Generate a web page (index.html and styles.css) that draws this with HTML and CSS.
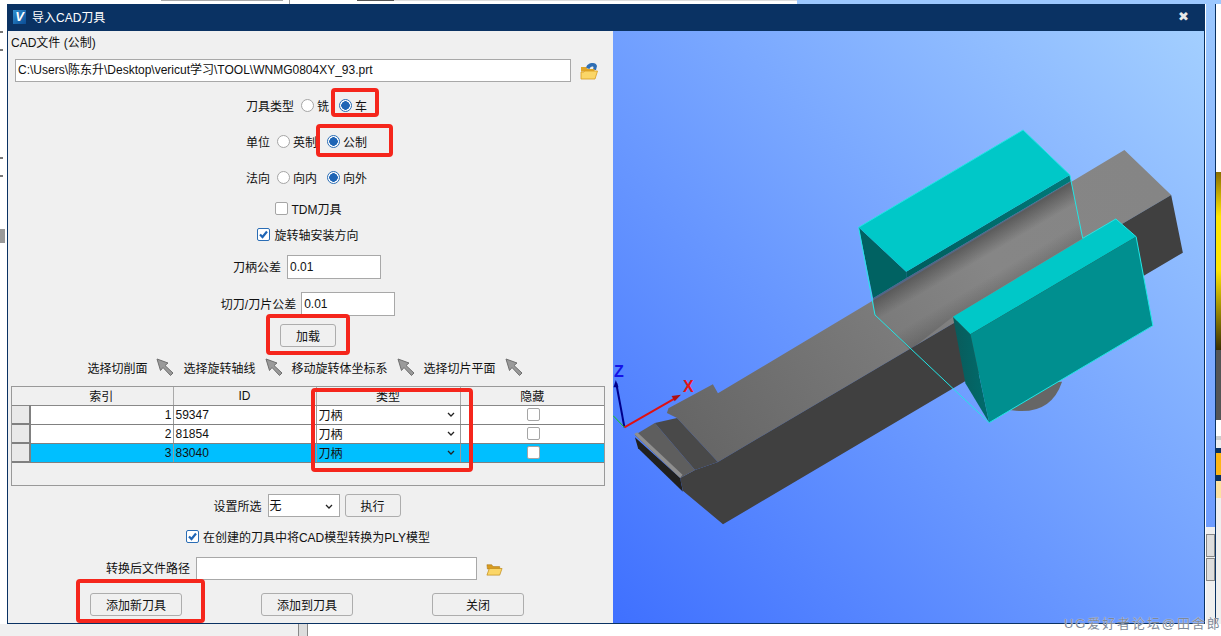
FILE: index.html
```html
<!DOCTYPE html>
<html lang="zh-CN">
<head>
  <meta charset="UTF-8">
  <title>导入CAD刀具</title>
  <link rel="stylesheet" href="styles.css">
</head>
<body>
  <svg class="defs" width="0" height="0">
    <symbol id="chev" viewBox="0 0 8 5"><path d="M1 1l3 3 3-3" fill="none" stroke="#222" stroke-width="1.3"/></symbol>
    <symbol id="tick" viewBox="0 0 11 11"><path d="M2 5.500l2.500 2.500 4.500-5.500" fill="none" stroke="#1f65b5" stroke-width="2.200"/></symbol>
    <symbol id="pick" viewBox="0 0 18 18"><path d="M1 1l11 4-3 2.500 8 7.500-2.500 2.500-7.500-8-2.500 3z" fill="#9a9a9a" stroke="#6f6f6f"/></symbol>
    <symbol id="folder" viewBox="0 0 18 18"><path d="M1 5h5l1.500 2h7v2.500h-13z" fill="#d99c1e" stroke="#a8761a" stroke-width=".6"/><path d="M1 16l2.500-7h13.500l-2.500 7z" fill="#fbd667" stroke="#c48f1d" stroke-width=".8"/></symbol>
  </svg>
  <div class="desk">
    <div class="top-strip"><i class="seg-white"></i><i class="seg-gray"></i><i class="seg-white2"></i><i class="seg-dark"></i><i class="seg-fill"></i><i class="seg-blue"></i></div>
    <div class="left-strip"></div>

    <div class="win">
      <div class="titlebar">
        <span class="logo">V</span>
        <span class="win-title">导入CAD刀具</span>
        <span class="win-close">✖</span>
      </div>
      <div class="win-body">
        <div class="form">
          <div class="cad-label">CAD文件 (公制)</div>
          <div class="path-row">
            <div class="field field-path">C:\Users\陈东升\Desktop\vericut学习\TOOL\WNMG0804XY_93.prt</div>
            <svg class="ico-open" viewBox="0 0 18 18"><path d="M6 6c.5-3 3-5 7-5 2 0 3.500 1 4 3l-1 4h-3l.5-3c-1.500-1-3.500 0-4 2z" fill="#2f6fb5"/><path d="M1 5h5l1.500 2h7v2.500h-13.500z" fill="#e0a526"/><path d="M1 17v-7h3l.5-1h13l-2.500 8z" fill="#fbd667" stroke="#d99c1e" stroke-width=".8"/></svg>
          </div>

          <div class="row row-radio row-first">
            <span>刀具类型</span>
            <span class="opt"><i class="radio"></i>铣</span>
            <span class="opt"><i class="radio on"></i>车</span>
          </div>
          <div class="row row-radio row-next">
            <span>单位</span>
            <span class="opt"><i class="radio"></i>英制</span>
            <span class="opt"><i class="radio on"></i>公制</span>
          </div>
          <div class="row row-radio row-next">
            <span>法向</span>
            <span class="opt"><i class="radio"></i>向内</span>
            <span class="opt"><i class="radio on"></i>向外</span>
          </div>

          <div class="row row-tdm"><i class="check"></i>TDM刀具</div>
          <div class="row row-rot"><i class="check on"><svg class="ico-tick"><use href="#tick"/></svg></i>旋转轴安装方向</div>

          <div class="row row-tol"><span class="lbl">刀柄公差</span><div class="field field-tol">0.01</div></div>
          <div class="row row-tol2"><span class="lbl">切刀/刀片公差</span><div class="field field-tol">0.01</div></div>
          <div class="row row-load"><button class="btn btn-load">加载</button></div>

          <div class="row row-tools">
            <span>选择切削面</span><svg class="ico-pick"><use href="#pick"/></svg>
            <span>选择旋转轴线</span><svg class="ico-pick"><use href="#pick"/></svg>
            <span>移动旋转体坐标系</span><svg class="ico-pick"><use href="#pick"/></svg>
            <span>选择切片平面</span><svg class="ico-pick"><use href="#pick"/></svg>
          </div>

          <div class="grid-wrap">
            <table class="grid">
              <colgroup><col class="c0"><col class="c1"><col class="c2"><col class="c3"><col class="c4"></colgroup>
              <thead>
                <tr><th></th><th>索引</th><th>ID</th><th>类型</th><th>隐藏</th></tr>
              </thead>
              <tbody>
                <tr>
                  <td class="rh"></td><td class="num">1</td><td>59347</td>
                  <td><div class="cell-sel">刀柄<svg class="ico-chev"><use href="#chev"/></svg></div></td>
                  <td class="mid"><i class="check"></i></td>
                </tr>
                <tr>
                  <td class="rh"></td><td class="num">2</td><td>81854</td>
                  <td><div class="cell-sel">刀柄<svg class="ico-chev"><use href="#chev"/></svg></div></td>
                  <td class="mid"><i class="check"></i></td>
                </tr>
                <tr class="sel">
                  <td class="rh"></td><td class="num">3</td><td>83040</td>
                  <td><div class="cell-sel">刀柄<svg class="ico-chev"><use href="#chev"/></svg></div></td>
                  <td class="mid"><i class="check"></i></td>
                </tr>
              </tbody>
            </table>
          </div>

          <div class="row row-set">
            <span>设置所选</span>
            <div class="field field-sel">无<svg class="ico-chev"><use href="#chev"/></svg></div>
            <button class="btn btn-run">执行</button>
          </div>
          <div class="row row-ply"><i class="check on"><svg class="ico-tick"><use href="#tick"/></svg></i>在创建的刀具中将CAD模型转换为PLY模型</div>
          <div class="path2-row">
            <span class="lbl">转换后文件路径</span>
            <div class="field field-out"></div>
            <svg class="ico-folder"><use href="#folder"/></svg>
          </div>
          <div class="row row-actions">
            <button class="btn btn-wide">添加新刀具</button>
            <button class="btn btn-wide">添加到刀具</button>
            <button class="btn btn-wide">关闭</button>
          </div>
        </div>

        <div class="view">
          <svg class="scene" width="591" height="593" viewBox="0 0 591 593">
            <defs>
              <linearGradient id="barTop" gradientUnits="userSpaceOnUse" x1="1380" y1="200" x2="200" y2="1000">
                <stop offset="0" stop-color="#858585"/><stop offset=".35" stop-color="#868686"/><stop offset="1" stop-color="#666"/>
              </linearGradient>
              <linearGradient id="lip" x1="0" y1="1" x2="1" y2="0">
                <stop offset="0" stop-color="#005c5c"/><stop offset="1" stop-color="#007a7a"/>
              </linearGradient>
              <linearGradient id="shade" gradientUnits="userSpaceOnUse" x1="970" y1="390" x2="1005" y2="441">
                <stop offset="0" stop-color="#444" stop-opacity=".7"/><stop offset="1" stop-color="#444" stop-opacity="0"/>
              </linearGradient>
              <linearGradient id="shadeLow" gradientUnits="userSpaceOnUse" x1="1075" y1="460" x2="1110" y2="510">
                <stop offset="0" stop-color="#444" stop-opacity="0"/><stop offset="1" stop-color="#444" stop-opacity=".35"/>
              </linearGradient>
              <linearGradient id="sideDark" gradientUnits="userSpaceOnUse" x1="880" y1="760" x2="960" y2="760">
                <stop offset="0" stop-color="#0a5a5a"/><stop offset="1" stop-color="#006a6a"/>
              </linearGradient>
            </defs>
            <g transform="translate(-3 69) scale(.3897 .3333)">
              <path d="M1025 930Q1130 950 1160 845L1050 850z" fill="#666"/>
              <polygon points="1320,150 1440,285 277,1086 172,954 146,939 150,925 264,853 277,880" fill="url(#barTop)"/>
              <polygon points="1440,285 1470,458 290,1273 187,1172 180,1134 218,1110 277,1086" fill="#404040"/>
              <polygon points="64,1005 115,969 218,1110 180,1134" fill="#5e5e5e"/>
              <polygon points="115,969 172,954 277,1086 218,1110" fill="#494949"/>
              <polygon points="64,1012 180,1134 187,1175 72,1045" fill="#202020"/>
              <polygon points="62,1002 70,997 186,1124 180,1134" fill="#8f8f8f"/>

              <polygon points="760,535 1183,243 1213,415 880,650 770,750 680,645 675,595" fill="url(#shade)"/>
              <polygon points="1213,415 880,650 770,750 680,645 1183,300" fill="url(#shadeLow)"/>

              <polygon points="638,382 760,515 760,535 675,595" fill="#006262"/>
              <polygon points="760,515 1180,225 1183,243 760,535" fill="url(#lip)"/>
              <polygon points="638,382 1060,90 1180,225 760,515" fill="#00c8c8"/>

              <polygon points="880,650 912,850 973,968 925,703" fill="url(#sideDark)"/>
              <polygon points="880,650 1298,357 1350,410 925,703" fill="#00c8c8"/>
              <polygon points="925,703 1350,410 1393,677 973,968" fill="#008f8f"/>

              <g fill="none" stroke="#22e6e6" stroke-width="1">
                <path d="M638 382L1060 90 1180 225 1213 415" vector-effect="non-scaling-stroke"/>
                <path d="M638 382L680 645 973 968 1393 677 1350 410 1298 357 1213 415" vector-effect="non-scaling-stroke"/>
              </g>

              <path d="M37 982L16 850" stroke="#00008c" stroke-width="2" vector-effect="non-scaling-stroke"/>
              <polygon points="15,840 22,862 9,862" fill="#00008c"/>
              <path d="M37 982L170 893" stroke="#e01010" stroke-width="2" vector-effect="non-scaling-stroke"/>
              <polygon points="182,884 166,904 158,888" fill="#b01010"/>
              <path d="M37 982L8 947" stroke="#10d010" stroke-width="1" vector-effect="non-scaling-stroke"/>
            </g>
            <text class="axis axis-z" x="1" y="346">Z</text>
            <text class="axis axis-x" x="70" y="361">X</text>
          </svg>
        </div>
      </div>
    </div>

    <div class="right-strip">
      <div class="strip-edge"></div>
      <div class="strip-blue"><div class="strip-blue-fill"></div><div class="strip-scroll"><i></i><i></i></div></div>
      <div class="strip-line"></div>
      <div class="strip-panel">
        <i class="p-white"></i><i class="p-gold"></i><i class="p-dark"></i><i class="p-white2"></i><i class="p-gray"></i><i class="p-navy"></i><i class="p-orange"></i><i class="p-navy2"></i><i class="p-pale"></i><i class="p-rest"></i>
      </div>
    </div>

    <div class="bottom-strip"><i class="bot-gray"></i><i class="bot-mark"></i></div>

    <i class="mark mark-1"></i><i class="mark mark-2"></i><i class="mark mark-3"></i><i class="mark mark-4"></i><i class="mark mark-5"></i>

    <!-- red note boxes drawn over the screenshot -->
    <i class="note note-turn"></i>
    <i class="note note-metric"></i>
    <i class="note note-load"></i>
    <i class="note note-type"></i>
    <i class="note note-add"></i>

    <div class="watermark">UG爱好者论坛@田舍郎</div>
  </div>
</body>
</html>
```

FILE: styles.css
```css
* {
  box-sizing: border-box;
}
html, body {
  margin: 0;
  padding: 0;
}
body {
  font: 12px "Liberation Sans", "Noto Sans CJK SC", sans-serif;
  color: #111;
  overflow: hidden;
}
i {
  font-style: normal;
  display: block;
}
.defs {
  position: absolute;
}
.desk {
  position: relative;
  width: 1221px;
  height: 636px;
  background: #fff;
  display: grid;
  grid-template-columns: 7px 1198px 16px;
  grid-template-rows: 4px 620px 12px;
  overflow: hidden;
}

/* stuff behind the dialog */
.top-strip {
  grid-column: 1 / 4;
  display: flex;
  height: 4px;
}
.seg-white { width: 161px; }
.seg-gray { width: 122px; height: 1px; background: #aaa; }
.seg-white2 { width: 68px; border-left: 1px solid #999; margin-left: 6px; }
.seg-dark { width: 37px; height: 1px; background: #555; }
.seg-fill { width: 403px; height: 1px; background: #ddd; }
.seg-blue { flex: 1; background: #9cc8ff; }
.left-strip {
  background: #fff;
  border-top: 6px solid #fff;
}
.mark {
  position: absolute;
  left: 0;
  width: 3px;
  height: 2px;
  background: #777;
}
.mark-1 { top: 31px; }
.mark-2 { top: 49px; }
.mark-3 { top: 157px; }
.mark-4 { top: 175px; }
.mark-5 { top: 229px; height: 14px; width: 5px; background: #999; }

.right-strip {
  display: flex;
  height: 620px;
}
.strip-edge {
  width: 1px;
  background: #fff;
}
.strip-blue {
  width: 9px;
  display: flex;
  flex-direction: column;
}
.strip-blue-fill {
  flex: 1;
  background: linear-gradient(#9cc8ff, #6e9cff);
}
.strip-scroll {
  height: 97px;
  background: #efefef;
  padding-top: 7px;
}
.strip-scroll i {
  height: 23px;
  background: #ddd;
  border: 1px solid #888;
  margin-bottom: 1px;
}
.strip-line {
  width: 1px;
  background: #0a3263;
}
.strip-panel {
  flex: 1;
  display: flex;
  flex-direction: column;
}
.p-white { height: 168px; }
.p-gold { height: 178px; background: linear-gradient(#8a6d00, #ffe600 25%, #ffe600 55%, #3a2e00); }
.p-dark { height: 70px; background: #555; }
.p-white2 { height: 16px; }
.p-gray { height: 12px; background: #eee; border-top: 4px solid #ccc; }
.p-navy { height: 5px; background: #0a3263; }
.p-orange { height: 22px; background: #fdb515; }
.p-navy2 { height: 6px; background: #0a3263; }
.p-pale { height: 17px; background: #fde2a0; }
.p-rest { flex: 1; background: #efefef; }

.bottom-strip {
  grid-column: 1 / 4;
  display: flex;
  background: #fff;
}
.bot-gray {
  width: 298px;
  background: #f0f0f0;
}
.bot-mark {
  width: 10px;
  border-left: 1px solid #888;
  border-right: 1px solid #888;
  background: #ddd;
}

/* dialog */
.win {
  border: 1px solid #0a3263;
  border-top: 0;
  display: flex;
  flex-direction: column;
  height: 620px;
  box-shadow: 1px 0 0 #fff;
}
.titlebar {
  height: 27px;
  flex: none;
  background: #0a3263;
  color: #fff;
  display: flex;
  align-items: center;
  padding: 0 0 2px 5px;
  font-size: 12px;
}
.logo {
  width: 13px;
  height: 14px;
  background: linear-gradient(135deg, #2f8fd0, #0b4c94);
  font: italic bold 13px/14px "Liberation Sans", sans-serif;
  text-align: center;
  margin-right: 6px;
}
.win-title {
  flex: 1;
}
.win-close {
  font: bold 13px "DejaVu Sans", sans-serif;
  color: #e8e8e8;
  margin-right: 15px;
}
.win-body {
  flex: 1;
  display: flex;
  min-height: 0;
}
.form {
  width: 605px;
  background: #f0f0f0;
  flex: none;
}
.cad-label {
  height: 24px;
  line-height: 24px;
  padding-left: 3px;
}
.path-row {
  display: flex;
  align-items: center;
  margin-top: 4px;
  padding-left: 7px;
  height: 23px;
}
.field {
  background: #fff;
  border: 1px solid #a8a8a8;
  height: 100%;
  line-height: 21px;
  padding-left: 2px;
}
.field-path {
  width: 556px;
}
.ico-open {
  width: 18px;
  height: 18px;
  margin-left: 9px;
}
.row {
  width: 600px;
  height: 24px;
  display: flex;
  align-items: center;
  justify-content: center;
}
.row-radio {
  gap: 7px;
  padding-bottom: 2px;
}
.row-first { margin-top: 12px; }
.row-next { margin-top: 12px; }
.row-tdm { margin-top: 7px; padding-bottom: 2px; }
.row-rot { margin-top: 2px; padding-bottom: 2px; }
.row-tol { margin-top: 8px; gap: 6px; padding-right: 2px; }
.row-tol2 { margin-top: 13px; gap: 5px; }
.row-load { margin-top: 8px; height: 23px; }
.row-tools { margin-top: 8px; gap: 9px; padding-right: 6px; }
.row-set { margin-top: 8px; height: 23px; padding-right: 2px; }
.row-ply { margin-top: 8px; padding-bottom: 2px; }
.row-actions { margin-top: 13px; height: 23px; gap: 79px; padding-right: 2px; }
.lbl {
  margin-top: -2px;
}
.opt {
  display: flex;
  align-items: center;
  gap: 3px;
  margin-right: 3px;
}
.radio {
  width: 13px;
  height: 13px;
  border: 1px solid #a5a5a5;
  border-radius: 50%;
  background: #fff;
}
.radio.on {
  border-color: #2a6db5;
  background: radial-gradient(circle, #1f65b5 0, #1f65b5 4px, #fff 4.5px);
}
.check {
  width: 13px;
  height: 13px;
  border: 1px solid #a5a5a5;
  border-radius: 2px;
  background: #fff;
  margin-right: 4px;
}
.check.on {
  border-color: #2a6db5;
}
.ico-tick {
  display: block;
  width: 11px;
  height: 11px;
}
.field-tol {
  width: 94px;
  height: 24px;
  line-height: 22px;
}
.btn {
  height: 23px;
  padding: 0;
  font: inherit;
  color: #111;
  background: #f0f0f0;
  border: 1px solid #adadad;
  border-radius: 3px;
}
.btn-load {
  width: 56px;
}
.btn-run {
  width: 56px;
  margin-left: 5px;
}
.btn-wide {
  width: 92px;
}
.ico-pick {
  width: 18px;
  height: 18px;
}
.grid-wrap {
  margin: 7px 0 0 3px;
  width: 594px;
  height: 100px;
  border: 1px solid #999;
}
.grid {
  width: 592px;
  table-layout: fixed;
  border-collapse: collapse;
}
.c0 { width: 18px; }
.c1 { width: 143px; }
.c2 { width: 143px; }
.c3 { width: 144px; }
.c4 { width: 144px; }
.grid th {
  height: 18px;
  padding: 0;
  font-weight: normal;
  background: #f0f0f0;
  border-right: 1px solid #aaa;
  border-bottom: 1px solid #888;
}
.grid th:first-child {
  border-right: 0;
}
.grid th:last-child,
.grid td:last-child {
  border-right: 0;
}
.grid td {
  height: 19px;
  padding: 0 0 0 2px;
  background: #fff;
  border-right: 1px solid #999;
  border-bottom: 1px solid #808080;
}
.grid .sel td {
  background: #00bfff;
}
.grid td.rh,
.grid .sel td.rh {
  background: #e9e9e9;
  border-right: 2px solid #808080;
  border-bottom: 2px solid #808080;
}
.grid td.num {
  text-align: right;
  padding-right: 1px;
}
.cell-sel {
  display: flex;
  align-items: center;
  justify-content: space-between;
  padding: 0 5px 0 0;
}
.ico-chev {
  width: 8px;
  height: 5px;
}
.grid td.mid .check {
  margin: 0 auto;
}
.field-sel {
  width: 72px;
  margin-left: 6px;
  display: flex;
  align-items: center;
  justify-content: space-between;
  padding: 2px 6px 0 1px;
}
.path2-row {
  display: flex;
  align-items: center;
  height: 23px;
  margin-top: 8px;
  padding-left: 98px;
}
.field-out {
  width: 281px;
  margin-left: 6px;
}
.ico-folder {
  width: 17px;
  height: 17px;
  margin-left: 9px;
}

/* 3d view */
.view {
  flex: 1;
  background: linear-gradient(to top right, #3f70ff, #a3cfff);
  overflow: hidden;
}
.scene {
  display: block;
}
.axis {
  font: bold 16px "Liberation Sans", sans-serif;
}
.axis-z { fill: #1414e6; }
.axis-x { fill: #e61414; }

/* red note boxes */
.note {
  position: absolute;
  border: 4px solid #f5261c;
  border-radius: 4px;
}
.note-turn { left: 331px; top: 88px; width: 48px; height: 29px; }
.note-metric { left: 316px; top: 124px; width: 77px; height: 33px; }
.note-load { left: 266px; top: 314px; width: 84px; height: 41px; }
.note-type { left: 311px; top: 388px; width: 162px; height: 84px; }
.note-add { left: 76px; top: 579px; width: 129px; height: 44px; }

.watermark {
  position: absolute;
  left: 1064px;
  top: 616px;
  font-size: 13px;
  line-height: 16px;
  letter-spacing: 1.9px;
  color: #7f8a99;
  text-shadow: 0 0 1px #fff;
  white-space: nowrap;
}
```
